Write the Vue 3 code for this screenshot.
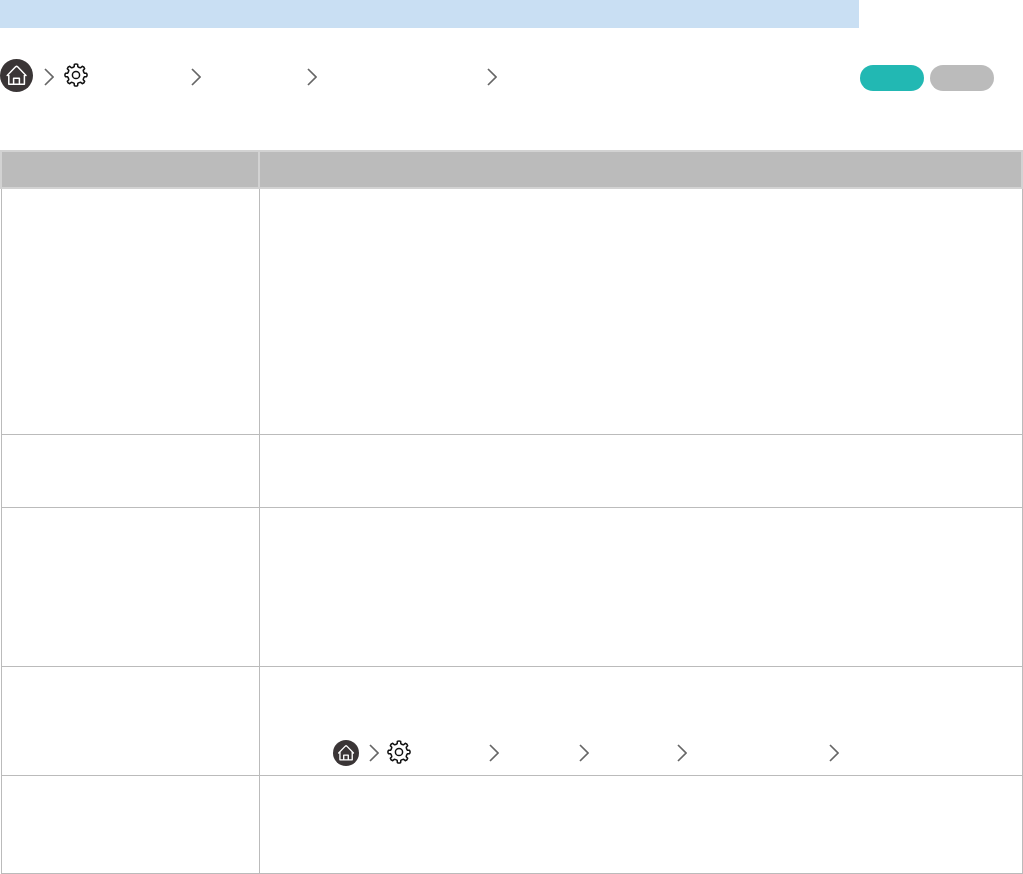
<script setup>
function gearPath(cx, cy, rOut, rIn, teeth) {
  const step = (Math.PI * 2) / teeth
  const p = (r, t) => (cx + r * Math.cos(t)).toFixed(2) + ' ' + (cy + r * Math.sin(t)).toFixed(2)
  let d = ''
  for (let i = 0; i < teeth; i++) {
    const a = i * step - Math.PI / 2
    d += (i ? 'Q' + p(rIn * 0.93, a - step / 2) + ' ' : 'M') + p(rIn, a - step * 0.27)
    d += 'L' + p(rOut - 0.6, a - step * 0.2)
    d += 'Q' + p(rOut + 0.3, a) + ' ' + p(rOut - 0.6, a + step * 0.2)
    d += 'L' + p(rIn, a + step * 0.27)
  }
  const a0 = -Math.PI / 2
  d += 'Q' + p(rIn * 0.93, a0 - step / 2) + ' ' + p(rIn, a0 - step * 0.27) + 'Z'
  return d
}
const gear = gearPath(12, 12, 11.3, 8.6, 8)
const rows = [
  { id: 1, h: 246 },
  { id: 2, h: 73 },
  { id: 3, h: 159 },
  { id: 4, h: 109, crumb: true },
  { id: 5, h: 98 }
]
</script>

<template>
  <div class="page">
    <div class="banner"></div>
    <div class="nav">
      <svg class="home" viewBox="0 0 33 33">
        <circle cx="16.5" cy="16.5" r="16.5" fill="#3a3536" />
        <path d="M7.2 16.4 15.6 7.8Q16.6 6.9 17.6 7.8L26 16.4M8.8 14.8V25.2H24.4V14.8M13.6 25.2V19.2H19.4V25.2" fill="none" stroke="#fff" stroke-width="1.5" stroke-linejoin="round" stroke-linecap="round" />
      </svg>
      <svg class="chev c1" viewBox="0 0 10 18"><path d="M1 1 9 9 1 17" /></svg>
      <svg class="gear g1" viewBox="0 0 24 24">
        <path :d="gear" />
        <circle cx="12" cy="12" r="3.6" />
      </svg>
      <svg class="chev c2" viewBox="0 0 10 18"><path d="M1 1 9 9 1 17" /></svg>
      <svg class="chev c3" viewBox="0 0 10 18"><path d="M1 1 9 9 1 17" /></svg>
      <svg class="chev c4" viewBox="0 0 10 18"><path d="M1 1 9 9 1 17" /></svg>
      <div class="pills">
        <span class="pill teal"></span>
        <span class="pill grey"></span>
      </div>
    </div>
    <table class="tbl">
      <colgroup>
        <col class="col-a" />
        <col />
      </colgroup>
      <thead>
        <tr class="head"><th></th><th></th></tr>
      </thead>
      <tbody>
        <tr v-for="r in rows" :key="r.id" :style="{ height: r.h + 'px' }">
          <td></td>
          <td class="cell">
            <div v-if="r.crumb" class="crumb">
              <svg class="home small" viewBox="0 0 33 33">
                <circle cx="16.5" cy="16.5" r="16.5" fill="#3a3536" />
                <path d="M7.2 16.4 15.6 7.8Q16.6 6.9 17.6 7.8L26 16.4M8.8 14.8V25.2H24.4V14.8M13.6 25.2V19.2H19.4V25.2" fill="none" stroke="#fff" stroke-width="1.7" stroke-linejoin="round" stroke-linecap="round" />
              </svg>
              <svg class="chev r1" viewBox="0 0 10 18"><path d="M1 1 9 9 1 17" /></svg>
              <svg class="gear g2" viewBox="0 0 24 24">
                <path :d="gear" />
                <circle cx="12" cy="12" r="3.6" />
              </svg>
              <svg class="chev r2" viewBox="0 0 10 18"><path d="M1 1 9 9 1 17" /></svg>
              <svg class="chev r3" viewBox="0 0 10 18"><path d="M1 1 9 9 1 17" /></svg>
              <svg class="chev r4" viewBox="0 0 10 18"><path d="M1 1 9 9 1 17" /></svg>
              <svg class="chev r5" viewBox="0 0 10 18"><path d="M1 1 9 9 1 17" /></svg>
            </div>
          </td>
        </tr>
      </tbody>
    </table>
  </div>
</template>

<style>
html, body { background: #fff; }
</style>

<style scoped>
.page {
  width: 1023px;
  height: 874px;
  overflow: hidden;
  background: #fff;
  font-family: "Liberation Sans", sans-serif;
}
.banner {
  width: 859px;
  height: 28px;
  background: #c9dff3;
}
.nav {
  display: flex;
  align-items: center;
  height: 33px;
  margin-top: 31px;
}
.home { width: 33px; height: 33px; flex: none; }
.home.small { width: 26px; height: 26px; }
.chev {
  width: 10px;
  height: 18px;
  flex: none;
  fill: none;
  stroke: #666;
  stroke-width: 1.7;
  margin-top: 2px;
}
.gear {
  width: 24px;
  height: 24px;
  flex: none;
  fill: none;
  stroke: #111;
  stroke-width: 1.5;
  stroke-linejoin: round;
  margin-bottom: 2px;
}
.c1 { margin-left: 11px; }
.g1 { margin-left: 10px; }
.c2 { margin-left: 103px; }
.c3 { margin-left: 106px; }
.c4 { margin-left: 170px; }
.pills {
  display: flex;
  gap: 6px;
  margin-left: auto;
  margin-right: 29px;
  padding-top: 5px;
}
.pill {
  display: block;
  width: 64px;
  height: 26px;
  border-radius: 13px;
}
.teal { background: #22b8b3; }
.grey { background: #bbb; }
.tbl {
  width: 1023px;
  margin-top: 58px;
  border-collapse: collapse;
  table-layout: fixed;
}
.col-a { width: 258px; }
.head { height: 37px; }
th {
  padding: 0;
  background: #bbb;
  border: 2px solid #d2d2d2;
}
td {
  padding: 0;
  border: 1px solid #bbb;
}
.cell { vertical-align: bottom; }
.crumb {
  display: flex;
  align-items: center;
  padding-left: 73px;
  padding-bottom: 9px;
}
.r1 { margin-left: 10px; margin-top: 0; }
.g2 { margin-left: 8px; }
.r2 { margin-left: 78px; margin-top: 0; }
.r3 { margin-left: 80px; margin-top: 0; }
.r4 { margin-left: 88px; margin-top: 0; }
.r5 { margin-left: 142px; margin-top: 0; }
</style>
